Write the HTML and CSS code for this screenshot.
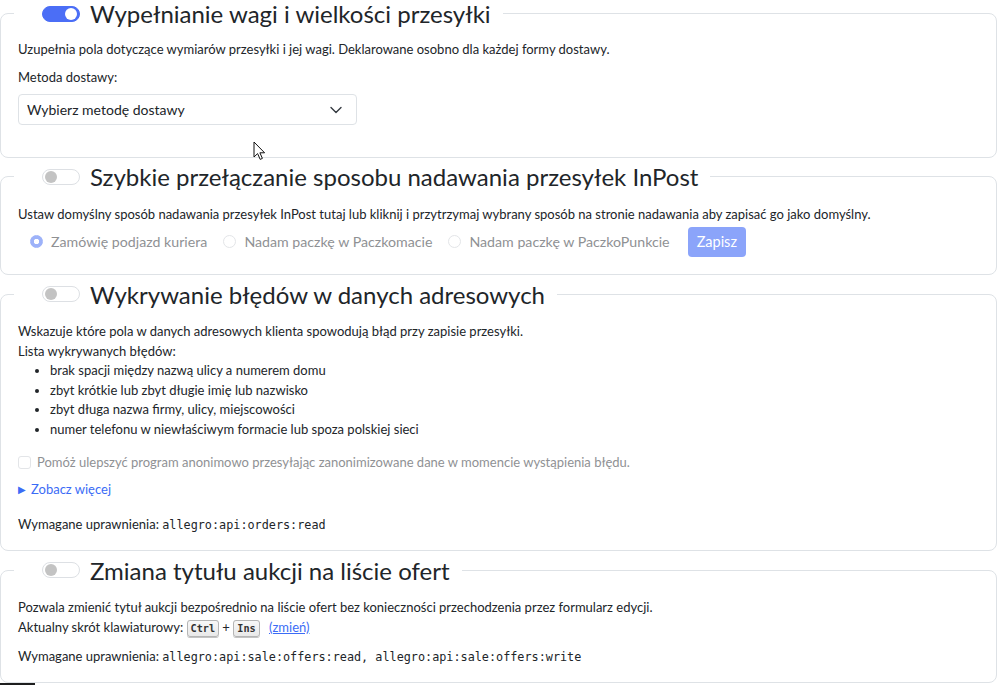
FILE: index.html
```html
<!DOCTYPE html>
<html lang="pl">
<head>
<meta charset="utf-8">
<title>Ustawienia</title>
<link rel="stylesheet" href="styles.css">
</head>
<body>
<main class="page">
  <fieldset class="card card-first">
    <legend class="card-legend">
      <span class="switch switch-on"></span>
      <span class="card-title">Wypełnianie wagi i wielkości przesyłki</span>
    </legend>
    <p class="desc">Uzupełnia pola dotyczące wymiarów przesyłki i jej wagi. Deklarowane osobno dla każdej formy dostawy.</p>
    <label class="field-label">Metoda dostawy:</label>
    <div class="select">
      <span>Wybierz metodę dostawy</span>
      <svg class="chevron" width="12" height="8" viewBox="0 0 12 8"><path d="M1 1.5 L6 6.5 L11 1.5" fill="none" stroke="#343a40" stroke-width="1.4" stroke-linecap="round" stroke-linejoin="round"/></svg>
    </div>
  </fieldset>

  <fieldset class="card">
    <legend class="card-legend">
      <span class="switch"></span>
      <span class="card-title">Szybkie przełączanie sposobu nadawania przesyłek InPost</span>
    </legend>
    <p class="desc">Ustaw domyślny sposób nadawania przesyłek InPost tutaj lub kliknij i przytrzymaj wybrany sposób na stronie nadawania aby zapisać go jako domyślny.</p>
    <div class="radio-row">
      <span class="radio"><span class="radio-dot radio-checked"></span>Zamówię podjazd kuriera</span>
      <span class="radio"><span class="radio-dot"></span>Nadam paczkę w Paczkomacie</span>
      <span class="radio"><span class="radio-dot"></span>Nadam paczkę w PaczkoPunkcie</span>
      <button class="btn" type="button">Zapisz</button>
    </div>
  </fieldset>

  <fieldset class="card card-errors">
    <legend class="card-legend">
      <span class="switch"></span>
      <span class="card-title">Wykrywanie błędów w danych adresowych</span>
    </legend>
    <p class="desc">Wskazuje które pola w danych adresowych klienta spowodują błąd przy zapisie przesyłki.<br>Lista wykrywanych błędów:</p>
    <ul class="list">
      <li>brak spacji między nazwą ulicy a numerem domu</li>
      <li>zbyt krótkie lub zbyt długie imię lub nazwisko</li>
      <li>zbyt długa nazwa firmy, ulicy, miejscowości</li>
      <li>numer telefonu w niewłaściwym formacie lub spoza polskiej sieci</li>
    </ul>
    <div class="check-row"><span class="checkbox"></span>Pomóż ulepszyć program anonimowo przesyłając zanonimizowane dane w momencie wystąpienia błędu.</div>
    <div class="more"><span class="more-arrow">▶</span><span>Zobacz więcej</span></div>
    <p class="perm perm-wide">Wymagane uprawnienia: <code>allegro:api:orders:read</code></p>
  </fieldset>

  <fieldset class="card card-last">
    <legend class="card-legend">
      <span class="switch"></span>
      <span class="card-title">Zmiana tytułu aukcji na liście ofert</span>
    </legend>
    <p class="desc">Pozwala zmienić tytuł aukcji bezpośrednio na liście ofert bez konieczności przechodzenia przez formularz edycji.<br>Aktualny skrót klawiaturowy: <kbd>Ctrl</kbd> + <kbd>Ins</kbd> <a class="link" href="#">(zmień)</a></p>
    <p class="perm">Wymagane uprawnienia: <code>allegro:api:sale:offers:read, allegro:api:sale:offers:write</code></p>
  </fieldset>
  <div class="footer-bar"></div>
</main>
<svg class="cursor" width="14" height="20" viewBox="0 0 14 20"><path d="M1 1 L1 16 L4.6 12.6 L7.2 18.4 L9.4 17.4 L6.9 11.8 L11.6 11.8 Z" fill="#fff" stroke="#111" stroke-width="1" stroke-linejoin="round"/></svg>
</body>
</html>
```
FILE: styles.css
```css
* { box-sizing: border-box; }
html, body { margin: 0; padding: 0; background: #fff; }
body {
  font-family: Lato, "Noto Sans", sans-serif;
  font-size: 13px;
  line-height: 19.5px;
  color: #212529;
  position: relative;
}
.page {
  padding: 0 3px 0 0;
  margin-top: -1px;
}
.card {
  border: 1px solid #dee2e6;
  border-radius: 8px;
  margin: 0 0 5px 0;
  padding: 0 17px 17px 17px;
  min-width: 0;
}
.card-first { padding-bottom: 32px; margin-bottom: 4px; }
.card-errors { padding-bottom: 15.5px; }
.card-last { padding-bottom: 15px; margin-bottom: 0; }
.card-legend {
  display: flex;
  align-items: center;
  margin-left: -4px;
  padding: 0 12px 0 28px;
  width: auto;
  float: none;
}
.switch {
  position: relative;
  flex: none;
  width: 38px;
  height: 16px;
  margin-right: 10px;
  border: 1px solid #dde0e4;
  border-radius: 8px;
  background: #fff;
}
.switch::after {
  content: "";
  position: absolute;
  top: 1px;
  left: 2px;
  width: 12px;
  height: 12px;
  border-radius: 50%;
  background: #c3c3c3;
}
.switch-on { background: #4b6ef6; border-color: #4b6ef6; }
.switch-on::after { left: auto; right: 2px; background: #fff; }
.card-title {
  font-size: 24px;
  line-height: 29px;
  font-weight: 400;
  color: #212529;
}
.desc { margin: 13.5px 0 0 0; }
.card-first .desc { margin-top: 12px; }
.field-label { display: block; margin-top: 8px; }
.select {
  margin-top: 7px;
  width: 339px;
  height: 31px;
  border: 1px solid #dee2e6;
  border-radius: 4px;
  display: flex;
  align-items: center;
  justify-content: space-between;
  padding: 0 14px 0 8px;
  font-size: 14px;
}
.chevron { display: block; }
.radio-row {
  display: flex;
  align-items: center;
  margin-top: 2.5px;
  padding-left: 12px;
}
.radio {
  display: flex;
  align-items: center;
  gap: 8px;
  margin-right: 16px;
  font-size: 14.2px;
  color: #8f9194;
}
.radio-dot {
  width: 13px;
  height: 13px;
  border-radius: 50%;
  border: 1px solid #e3e5e8;
  background: #fff;
}
.radio-checked {
  border-color: #9db2f9;
  background: radial-gradient(circle, #fff 0 2.4px, #9db2f9 3px);
}
.btn {
  margin-left: 2px;
  height: 30px;
  padding: 0 9px;
  border: 0;
  border-radius: 4px;
  background: #8ba4fa;
  color: #fff;
  font-family: Lato, "Noto Sans", sans-serif;
  font-size: 14.5px;
}
.list {
  margin: 0 0 14px 0;
  padding-left: 32px;
}
.check-row {
  display: flex;
  align-items: center;
  gap: 6px;
  color: #8f9194;
}
.checkbox {
  flex: none;
  width: 13px;
  height: 13px;
  border: 1px solid #e3e5e8;
  border-radius: 3px;
}
.more {
  margin-top: 7px;
  display: flex;
  align-items: center;
  color: #3b6cf6;
}
.more-arrow {
  font-size: 10px;
  margin-right: 5px;
  line-height: 1;
}
.perm { margin: 10px 0 0 0; }
.perm-wide { margin-top: 15.5px; }
code {
  font-family: "DejaVu Sans Mono", "Liberation Mono", monospace;
  font-size: 11.8px;
  line-height: 1;
  color: #212529;
}
kbd {
  font-family: "DejaVu Sans Mono", "Liberation Mono", monospace;
  font-size: 10.2px;
  font-weight: 700;
  line-height: 1;
  padding: 2px 3px 2px;
  color: #333;
  background: linear-gradient(#f8f8f8, #e9e9e9);
  border: 1px solid #b5b5b5;
  border-radius: 3px;
  box-shadow: 0 1px 0 #c4c4c4;
}
.link {
  color: #3b6cf6;
  text-decoration: underline;
  margin-left: 6px;
}
.footer-bar {
  width: 35px;
  height: 3px;
  background: #1e1e1e;
}
.cursor {
  position: absolute;
  left: 253px;
  top: 141px;
}
```
